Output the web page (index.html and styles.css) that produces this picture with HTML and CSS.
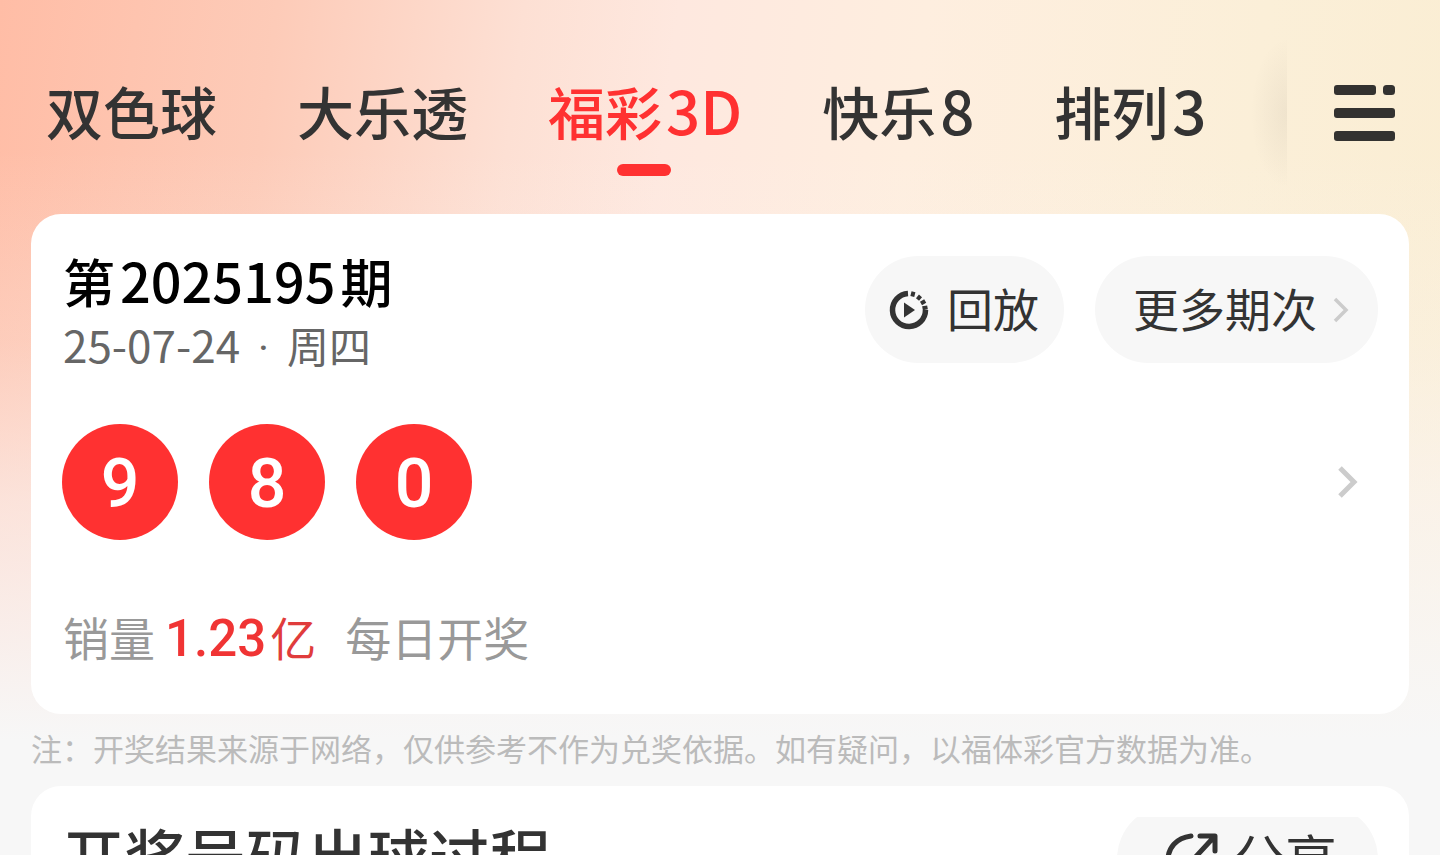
FILE: index.html
```html
<!DOCTYPE html>
<html lang="zh-CN">
<head>
<meta charset="utf-8">
<meta name="viewport" content="width=device-width, initial-scale=1">
<title>福彩3D</title>
<link rel="stylesheet" href="styles.css">
</head>
<body>
<header class="topbar">
  <nav class="tabs">
    <a class="tab" href="#ssq">双色球</a>
    <a class="tab" href="#dlt">大乐透</a>
    <a class="tab tab-active" href="#fc3d" aria-current="page"><span>福彩</span><span class="tab-num">3D</span></a>
    <a class="tab" href="#kl8"><span>快乐</span><span class="tab-num">8</span></a>
    <a class="tab" href="#pl3"><span>排列</span><span class="tab-num">3</span></a>
  </nav>
  <div class="edge"></div>
  <button class="menu" type="button" aria-label="菜单">
    <svg width="62" height="56" viewBox="0 0 62 56" fill="#333230"><rect x="0" y="0" width="42" height="10" rx="3"/><rect x="49" y="0" width="12" height="10" rx="3.500"/><rect x="0" y="23" width="61" height="10" rx="3"/><rect x="0" y="46" width="61" height="10" rx="3"/></svg>
  </button>
</header>
<main>
  <section class="card">
    <div class="card-head">
      <div class="heading">
        <h1 class="issue"><span>第</span><span class="issue-num">2025195</span><span>期</span></h1>
        <p class="date"><span class="date-num">25-07-24</span><span class="dot">·</span><span>周四</span></p>
      </div>
      <div class="actions">
        <button class="pill pill-replay" type="button">
          <svg width="40" height="40" viewBox="0 0 40 40"><path d="M19 3.500A16.500 16.500 0 1 0 36.500 20" fill="none" stroke="#333" stroke-width="5.500"/><path d="M15 12.500v15L26 20z" fill="#333"/><path d="M23.300 6.400l1.200-4.600M28.500 9.500l3-3.600M32 13.500l4.200-2.500M33.500 18.300l5-.9" fill="none" stroke="#333" stroke-width="4"/></svg>
          <span>回放</span>
        </button>
        <button class="pill pill-more" type="button">
          <span>更多期次</span>
          <svg width="16" height="26" viewBox="0 0 16 26"><path d="M2 2l11 11L2 24" fill="none" stroke="#ccc" stroke-width="3.500"/></svg>
        </button>
      </div>
    </div>
    <a class="result" href="#detail" aria-label="开奖详情">
      <span class="balls"><span class="ball">9</span><span class="ball">8</span><span class="ball">0</span></span>
      <svg width="22" height="34" viewBox="0 0 22 34"><path d="M3 3l14 14L3 31" fill="none" stroke="#ccc" stroke-width="5"/></svg>
    </a>
    <p class="sales"><span>销量</span><span class="amount">1.23</span><span class="unit">亿</span><span class="daily">每日开奖</span></p>
  </section>
  <p class="note">注：开奖结果来源于网络，仅供参考不作为兑奖依据。如有疑问，以福体彩官方数据为准。</p>
  <section class="card card-process">
    <h2 class="process-title">开奖号码出球过程</h2>
    <div class="share-clip">
      <button class="pill pill-share" type="button">
        <svg width="54" height="54" viewBox="0 0 54 54" fill="none" stroke="#333" stroke-width="5" stroke-linecap="round" stroke-linejoin="round"><path d="M26 3C11 5 3 15 3 27s10 24 24 24 24-10 24-22"/><path d="M35 3h15v15M49 4L25 30"/></svg>
        <span>分享</span>
      </button>
    </div>
  </section>
</main>
</body>
</html>
```
FILE: styles.css
```css
* { box-sizing: border-box; }

html { height: 100%; overflow: hidden; }

body {
  margin: 0;
  height: 100%;
  overflow: hidden;
  font-family: "Noto Sans CJK SC", sans-serif;
  color: #333;
  background:
    linear-gradient(180deg, rgba(247,247,247,0) 150px, rgba(249,245,243,.25) 340px, rgba(250,245,244,.65) 500px, #f7f7f7 740px),
    linear-gradient(97deg, #ffbda6 0%, #fdcbb8 18%, #fde0d4 34%, #fee8df 44%, #feeedf 60%, #fbefd8 82%, #faedd2 100%);
}

h1, h2, p { margin: 0; font-weight: 400; }

button { border: 0; padding: 0; font: inherit; color: inherit; background: none; }

a { color: inherit; text-decoration: none; }

.topbar {
  display: flex;
  align-items: center;
  height: 214px;
  padding: 12px 44px 0 46px;
}

.tabs {
  display: flex;
  align-items: baseline;
  gap: 80px;
  flex: 1;
  padding-bottom: 8px;
}

.tab {
  position: relative;
  display: flex;
  align-items: baseline;
  gap: 4px;
  font-size: 57px;
  font-weight: 500;
  line-height: 80px;
  white-space: nowrap;
}

.tab-num { font-size: 60px; }

.tab-active { color: #ff3131; }

.tab-active::after {
  content: "";
  position: absolute;
  left: 50%;
  bottom: -26px;
  width: 54px;
  height: 12px;
  margin-left: -28px;
  border-radius: 6px;
  background: #ff3131;
}

.edge {
  width: 36px;
  height: 150px;
  margin-right: 47px;
  background: radial-gradient(ellipse 36px 75px at 100% 50%, rgba(90,80,70,.07), rgba(90,80,70,0));
}

.menu { display: flex; }

.card {
  margin: 0 31px;
  padding: 32px;
  border-radius: 30px;
  background: #fff;
}

.card-head {
  display: flex;
  justify-content: space-between;
  height: 120px;
}

.issue {
  display: flex;
  align-items: baseline;
  gap: 5px;
  font-size: 52px;
  font-weight: 500;
  line-height: 68px;
  color: #000;
}

.issue-num { font-size: 54px; }

.date {
  display: flex;
  align-items: baseline;
  font-size: 42px;
  line-height: 58px;
  color: #666;
}

.date-num { font-size: 44px; }

.dot { width: 47px; font-family: Roboto, sans-serif; text-align: center; }

.actions { display: flex; gap: 31px; padding-top: 10px; margin-right: -1px; }

.pill {
  display: flex;
  align-items: center;
  height: 107px;
  border-radius: 54px;
  background: #f7f7f7;
  font-size: 46px;
  line-height: 64px;
  white-space: nowrap;
}

.pill span { padding-bottom: 6px; }

.pill-replay { gap: 18px; padding: 0 25px 0 24px; }

.pill-more { gap: 16px; padding: 0 29px 0 38px; }

.result {
  display: flex;
  justify-content: space-between;
  align-items: center;
  margin-top: 58px;
  padding-right: 18px;
}

.balls { display: flex; gap: 31px; margin-left: -1px; }

.ball {
  width: 116px;
  height: 116px;
  border-radius: 50%;
  background: #ff3131;
  color: #fff;
  font-family: Roboto, sans-serif;
  font-size: 68px;
  font-weight: 500;
  line-height: 120px;
  text-align: center;
}

.sales {
  display: flex;
  align-items: baseline;
  margin-top: 62px;
  padding-bottom: 9px;
  font-size: 46px;
  line-height: 68px;
  color: #999;
}

.amount {
  margin: 0 4px 0 10px;
  font-family: Roboto, sans-serif;
  font-size: 51px;
  font-weight: 500;
  color: #f03434;
}

.unit { color: #e03c3c; }

.daily { margin-left: 29px; }

.note {
  margin: 0 31px;
  padding-bottom: 4px;
  font-size: 31px;
  line-height: 68px;
  color: #bbb;
  white-space: nowrap;
}

.card-process {
  display: flex;
  justify-content: space-between;
  align-items: flex-start;
  padding-top: 31px;
}

.process-title { font-size: 61px; font-weight: 500; line-height: 76px; }

.share-clip { overflow: hidden; margin-right: -1px; }

.pill-share {
  gap: 14px;
  height: 110px;
  margin-top: -12px;
  padding: 0 41px 0 48px;
  font-size: 52px;
}
```
